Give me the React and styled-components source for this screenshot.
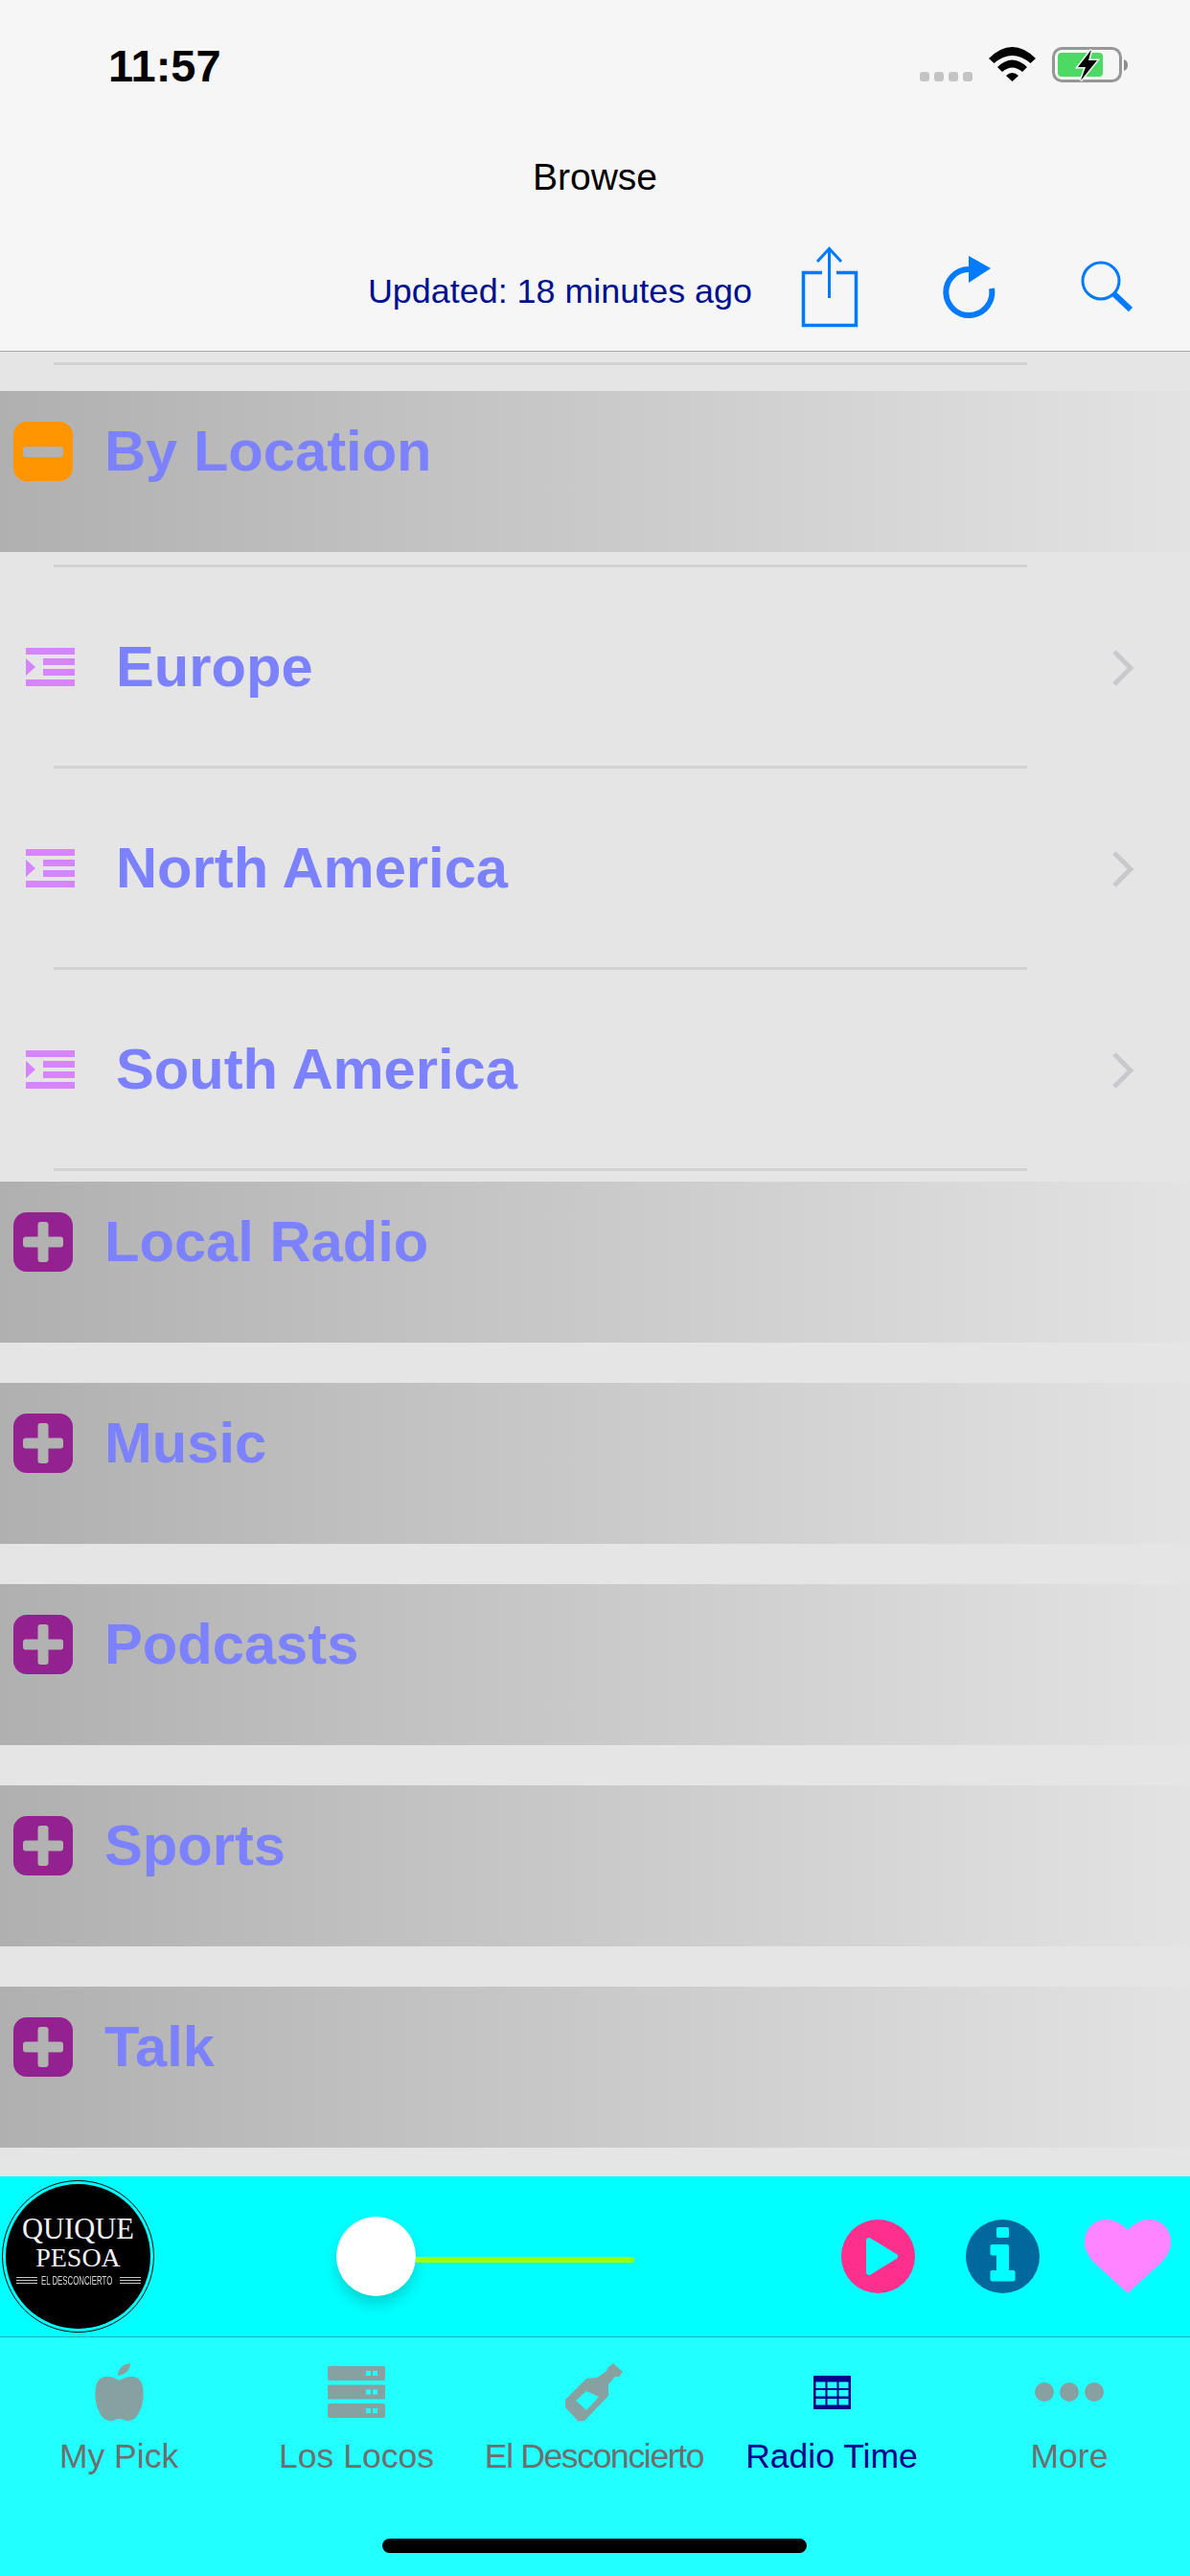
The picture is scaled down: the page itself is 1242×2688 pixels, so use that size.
import styled, { createGlobalStyle } from 'styled-components';

const GlobalStyle = createGlobalStyle`
  html, body {
    margin: 0;
    padding: 0;
    background: #e5e5e5;
    font-family: "Liberation Sans", Arial, sans-serif;
  }
`;

const BLUE = '#007aff';
const TAB_GREY = '#87a0a0';
const NAVY = '#00008b';

const Page = styled.div`
  position: relative;
  width: 1242px;
  height: 2688px;
  overflow: hidden;
  display: flex;
  flex-direction: column;
  background: #e5e5e5;
`;

const Header = styled.header`
  box-sizing: border-box;
  height: 367px;
  background: #f6f6f7;
  border-bottom: 1px solid #a9a9a9;
  flex: none;
`;

const StatusBar = styled.div`
  box-sizing: border-box;
  height: 120px;
  padding: 49px 65px 0 113px;
  display: flex;
  align-items: flex-start;
`;

const Time = styled.div`
  font-size: 47px;
  line-height: 40px;
  font-weight: 700;
  color: #000;
  margin-right: auto;
`;

const SignalDots = styled.div`
  display: flex;
  gap: 5px;
  margin: 26px 17px 0 0;
`;

const SignalDot = styled.span`
  width: 10px;
  height: 10px;
  border-radius: 3px;
  background: #c4c4c4;
`;

const Wifi = styled.svg`
  width: 49px;
  height: 36px;
  margin-right: 17px;
`;

const Battery = styled.svg`
  width: 79px;
  height: 37px;
`;

const Title = styled.div`
  height: 130px;
  display: flex;
  align-items: center;
  justify-content: center;
  font-size: 39px;
  color: #000;
`;

const Toolbar = styled.div`
  height: 90px;
  margin-top: 5px;
  padding-right: 60px;
  display: flex;
  align-items: center;
  justify-content: flex-end;
`;

const Updated = styled.div`
  font-size: 35.9px;
  line-height: 40px;
  padding-top: 8px;
  color: #00108f;
  margin-right: 50px;
`;

const ToolIcon = styled.svg`
  height: 90px;
  width: ${props => props.$w}px;
  margin-right: ${props => props.$gap || 0}px;
`;

const List = styled.main`
  flex: 1;
  display: flex;
  flex-direction: column;
  padding-top: 11px;
`;

const Sep = styled.div`
  width: 1016px;
  height: 3px;
  margin-left: 56px;
  background: #d2d2d2;
  flex: none;
`;

const Section = styled.div`
  box-sizing: border-box;
  height: 168px;
  padding: 32px 0 0 14px;
  display: flex;
  align-items: flex-start;
  gap: 33px;
  background: linear-gradient(90deg, #b0b0b0, #e3e3e3);
  flex: none;
  margin-top: ${props => props.$top || 0}px;
  margin-bottom: ${props => props.$bottom || 0}px;
`;

const SectionIcon = styled.svg`
  width: 62px;
  height: 62px;
  flex: none;
`;

const SectionText = styled.div`
  font-size: 59.7px;
  line-height: 62px;
  font-weight: 700;
  color: #7c82ff;
`;

const Row = styled.div`
  box-sizing: border-box;
  height: 207px;
  padding: 0 56px 0 27px;
  display: flex;
  align-items: center;
  flex: none;
`;

const RowIcon = styled.svg`
  width: 51px;
  height: 40px;
  margin-right: 43px;
  flex: none;
`;

const RowText = styled.div`
  font-size: 59.7px;
  line-height: 70px;
  font-weight: 700;
  color: #7c82ff;
  margin-right: auto;
`;

const Chevron = styled.svg`
  width: 26px;
  height: 40px;
  margin-top: 2px;
  flex: none;
`;

const Player = styled.div`
  box-sizing: border-box;
  position: absolute;
  left: 0;
  right: 0;
  top: 2271px;
  height: 168px;
  background: #00ffff;
  border-bottom: 1px solid #22b4b8;
  display: flex;
  align-items: center;
  padding-left: 2px;
`;

const Logo = styled.div`
  box-sizing: border-box;
  width: 159px;
  height: 159px;
  border-radius: 50%;
  border: 1px solid #000;
  padding: 3px;
  flex: none;
`;

const LogoInner = styled.div`
  height: 100%;
  border-radius: 50%;
  background: #000;
  color: #f2f2f2;
  display: flex;
  flex-direction: column;
  align-items: center;
  padding-top: 32px;
  box-sizing: border-box;
  font-family: "Liberation Serif", "Times New Roman", serif;
`;

const LogoName = styled.div`
  font-size: ${props => props.$size}px;
  line-height: ${props => props.$line}px;
  white-space: nowrap;
`;

const LogoTag = styled.div`
  display: flex;
  align-items: center;
  width: 130px;
  margin-top: 4px;
  justify-content: space-between;
`;

const LogoRule = styled.span`
  width: 22px;
  height: 9px;
  background: repeating-linear-gradient(180deg, #c8c8c8 0 1px, #000 1px 3px);
`;

const LogoTagText = styled.span`
  display: block;
  width: 78px;
  font-family: "Liberation Sans", Arial, sans-serif;
  font-size: 13.5px;
  line-height: 12px;
  white-space: nowrap;
  color: #d8d8d8;
  transform: scaleX(0.58);
  transform-origin: left center;
`;

const Slider = styled.div`
  display: flex;
  align-items: center;
  margin-left: 190px;
  flex: none;
`;

const Thumb = styled.div`
  width: 83px;
  height: 83px;
  border-radius: 50%;
  background: #fff;
  box-shadow: 0 9px 14px rgba(0, 0, 0, 0.16);
`;

const Track = styled.div`
  width: 228px;
  height: 6px;
  margin-top: 7px;
  border-radius: 0 3px 3px 0;
  background: #9dff00;
`;

const PlayerIcon = styled.svg`
  height: 77px;
  width: ${props => props.$w || 77}px;
  margin-left: ${props => props.$gap}px;
  flex: none;
`;

const TabBar = styled.nav`
  position: absolute;
  left: 0;
  right: 0;
  top: 2439px;
  bottom: 0;
  background: #22ffff;
  display: grid;
  grid-template-columns: repeat(5, 248px);
  padding-top: 27px;
  align-content: start;
`;

const Tab = styled.div`
  display: flex;
  flex-direction: column;
  align-items: center;
  color: ${props => (props.$active ? NAVY : '#6e6e6e')};
`;

const TabIconBox = styled.div`
  height: 60px;
  display: flex;
  align-items: center;
  justify-content: center;
`;

const TabIcon = styled.svg`
  width: ${props => props.$w}px;
  height: ${props => props.$h}px;
  filter: blur(0.5px);
`;

const TabLabel = styled.div`
  margin-top: 16px;
  font-size: 35.5px;
  line-height: 42px;
  white-space: nowrap;
  letter-spacing: ${props => props.$squeeze || 0}px;
`;

const HomeIndicator = styled.div`
  position: absolute;
  left: 399px;
  bottom: 24px;
  width: 443px;
  height: 15px;
  border-radius: 8px;
  background: #000;
`;

const OUTER =
  'M14 0H48A14 14 0 0 1 62 14V48A14 14 0 0 1 48 62H14A14 14 0 0 1 0 48V14A14 14 0 0 1 14 0Z';
const MINUS = 'M13 26H49A3 3 0 0 1 52 29V34A3 3 0 0 1 49 37H13A3 3 0 0 1 10 34V29A3 3 0 0 1 13 26Z';
const PLUS =
  'M28.5 10H33.5A3 3 0 0 1 36.5 13V25.5H49A3 3 0 0 1 52 28.5V33.5A3 3 0 0 1 49 36.5H36.5V49A3 3 0 0 1 33.5 52H28.5A3 3 0 0 1 25.5 49V36.5H13A3 3 0 0 1 10 33.5V28.5A3 3 0 0 1 13 25.5H25.5V13A3 3 0 0 1 28.5 10Z';

const ExpandIcon = ({ open }) => (
  <SectionIcon viewBox="0 0 62 62">
    <path
      fillRule="evenodd"
      fill={open ? '#ff9500' : '#93218f'}
      d={`${OUTER}${open ? MINUS : PLUS}`}
    />
  </SectionIcon>
);

const IndentIcon = () => (
  <RowIcon viewBox="0 0 51 40" fill="#d685ff">
    <rect width="51" height="7" />
    <rect x="18" y="11" width="33" height="7" />
    <rect x="18" y="22" width="33" height="7" />
    <rect y="33" width="51" height="7" />
    <path d="M0 11L10 20L0 29Z" />
  </RowIcon>
);

const ChevronRight = () => (
  <Chevron viewBox="0 0 26 40">
    <path d="M3 3L20 20L3 37" fill="none" stroke="#c9c9cd" strokeWidth="5" />
  </Chevron>
);

const sections = [
  { name: 'Local Radio', bottom: 42 },
  { name: 'Music', bottom: 42 },
  { name: 'Podcasts', bottom: 42 },
  { name: 'Sports', bottom: 42 },
  { name: 'Talk', bottom: 0 },
];

const regions = ['Europe', 'North America', 'South America'];

const tabs = [
  {
    label: 'My Pick',
    icon: (
      <TabIcon $w={51} $h={60} viewBox="0 0 51 60" fill={TAB_GREY}>
        <path d="M25.5 18C20 14 8 11 3 19C-1 26 0 40 3 47C6 55 10 60 16 60C20 60 22 58 25.5 58C29 58 31 60 35 60C41 60 45 55 48 47C51 40 52 26 48 19C43 11 31 14 25.5 18Z" />
        <path d="M24 13C24 6 29 1 37 0C37 7 32 12 24 13Z" />
      </TabIcon>
    ),
  },
  {
    label: 'Los Locos',
    icon: (
      <TabIcon $w={60} $h={54} viewBox="0 0 60 54">
        {[0, 19.5, 39].map(y => (
          <g key={y}>
            <rect y={y} width="60" height="15" rx="1.5" fill={TAB_GREY} />
            <rect x="40" y={y + 5} width="5" height="5" fill="#22ffff" />
            <rect x="47" y={y + 5} width="5" height="5" fill="#22ffff" />
          </g>
        ))}
      </TabIcon>
    ),
  },
  {
    label: 'El Desconcierto',
    squeeze: -1.35,
    icon: (
      <TabIcon $w={60} $h={60} viewBox="0 0 60 60" fill={TAB_GREY}>
        <path
          fillRule="evenodd"
          d="M50 0L60 9L56 14L52 14L45 22L45 34L20 60L13 60L0 46L0 38L22 16L33 15L42 9L45 4ZM22 29L11 39L22 49L35 35Z"
        />
      </TabIcon>
    ),
  },
  {
    label: 'Radio Time',
    active: true,
    icon: (
      <TabIcon $w={39} $h={35} viewBox="0 0 39 35">
        <rect width="39" height="35" rx="1" fill={NAVY} />
        {[6.5, 15, 24].map(y =>
          [2.5, 14.5, 26.5].map(x => (
            <rect key={`${x}-${y}`} x={x} y={y} width="10" height="6.5" fill="#22ffff" />
          ))
        )}
      </TabIcon>
    ),
  },
  {
    label: 'More',
    icon: (
      <TabIcon $w={72} $h={20} viewBox="0 0 72 20" fill={TAB_GREY}>
        <circle cx="10" cy="10" r="10" />
        <circle cx="36" cy="10" r="10" />
        <circle cx="62" cy="10" r="10" />
      </TabIcon>
    ),
  },
];

const App = () => (
  <Page>
    <GlobalStyle />
    <Header>
      <StatusBar>
        <Time>11:57</Time>
        <SignalDots>
          <SignalDot />
          <SignalDot />
          <SignalDot />
          <SignalDot />
        </SignalDots>
        <Wifi viewBox="0 0 49 36" fill="#000">
          <path d="M0 12Q24.5 -12 49 12L43.5 17Q24.5 1 5.5 17Z" />
          <path d="M9 21Q24.5 6 40 21L35 26Q24.5 17 14 26Z" />
          <path d="M18 30Q24.5 24 31 30L24.5 36Z" />
        </Wifi>
        <Battery viewBox="0 0 79 37">
          <rect x="1.5" y="1.5" width="70" height="34" rx="9" fill="none" stroke="#979797" strokeWidth="3" />
          <rect x="6" y="6" width="47" height="25" rx="4" fill="#4cd964" />
          <path d="M75 13C78 14 79 16 79 19C79 22 78 24 75 25Z" fill="#8e8e8e" />
          <path
            d="M41 3L27 21H35L30 35L47 14H38Z"
            fill="#000"
            stroke="#f6f6f7"
            strokeWidth="3"
            paintOrder="stroke"
          />
        </Battery>
      </StatusBar>
      <Title>Browse</Title>
      <Toolbar>
        <Updated>Updated: 18 minutes ago</Updated>
        <ToolIcon $w={62} $gap={85} viewBox="0 0 62 90">
          <g fill="none" stroke={BLUE}>
            <path d="M23 29.5H3.5V84.5H58.5V29.5H38" strokeWidth="3.5" />
            <path d="M30.5 4V56" strokeWidth="3" />
            <path d="M18 18L30.5 4.5L43 18" strokeWidth="3" />
          </g>
        </ToolIcon>
        <ToolIcon $w={60} $gap={83} viewBox="0 0 60 90">
          <path d="M53 46A24 24 0 1 1 29 26" fill="none" stroke={BLUE} strokeWidth="6" />
          <path d="M29 12L52 25L29 40Z" fill={BLUE} />
        </ToolIcon>
        <ToolIcon $w={57} viewBox="0 0 57 90">
          <circle cx="24" cy="38" r="19" fill="none" stroke={BLUE} strokeWidth="3" />
          <path d="M38 52L55 68" stroke={BLUE} strokeWidth="6" />
        </ToolIcon>
      </Toolbar>
    </Header>

    <List>
      <Sep />
      <Section $top={27} $bottom={13}>
        <ExpandIcon open />
        <SectionText>By Location</SectionText>
      </Section>
      {regions.map(name => (
        <div key={name}>
          <Sep />
          <Row>
            <IndentIcon />
            <RowText>{name}</RowText>
            <ChevronRight />
          </Row>
        </div>
      ))}
      <Sep />
      {sections.map((section, i) => (
        <Section key={section.name} $top={i === 0 ? 11 : 0} $bottom={section.bottom}>
          <ExpandIcon />
          <SectionText>{section.name}</SectionText>
        </Section>
      ))}
    </List>

    <Player>
      <Logo>
        <LogoInner>
          <LogoName $size={30.5} $line={30}>QUIQUE</LogoName>
          <LogoName $size={28} $line={29}>PESOA</LogoName>
          <LogoTag>
            <LogoRule />
            <LogoTagText>EL DESCONCIERTO</LogoTagText>
            <LogoRule />
          </LogoTag>
        </LogoInner>
      </Logo>
      <Slider>
        <Thumb />
        <Track />
      </Slider>
      <PlayerIcon $gap={216} viewBox="0 0 77 77">
        <circle cx="38.5" cy="38.5" r="38.5" fill="#ff2f8e" />
        <path d="M29 22L56 38.5L29 55Z" fill="#00ffff" stroke="#00ffff" strokeWidth="6" strokeLinejoin="round" />
      </PlayerIcon>
      <PlayerIcon $gap={53} viewBox="0 0 77 77">
        <circle cx="38.5" cy="38.5" r="38.5" fill="#00689c" />
        <g fill="#00ffff">
          <rect x="32" y="8" width="13" height="11" rx="2" />
          <path d="M27.5 26H43A2 2 0 0 1 45 28V53.5H32V37.5H27.5A2 2 0 0 1 25.5 35.5V28A2 2 0 0 1 27.5 26Z" />
          <rect x="25.5" y="53" width="26" height="11.5" rx="2" />
        </g>
      </PlayerIcon>
      <PlayerIcon $w={90} $gap={47} viewBox="0 0 90 77">
        <path
          d="M45 11C38 4 31 0 23 0C10 0 0 10 0 23C0 32 4 38 9 44L45 77L81 44C86 38 90 32 90 23C90 10 80 0 67 0C59 0 52 4 45 11Z"
          fill="#ff85ff"
        />
      </PlayerIcon>
    </Player>

    <TabBar>
      {tabs.map(tab => (
        <Tab key={tab.label} $active={tab.active}>
          <TabIconBox>{tab.icon}</TabIconBox>
          <TabLabel $squeeze={tab.squeeze}>{tab.label}</TabLabel>
        </Tab>
      ))}
      <HomeIndicator />
    </TabBar>
  </Page>
);

export default App;
